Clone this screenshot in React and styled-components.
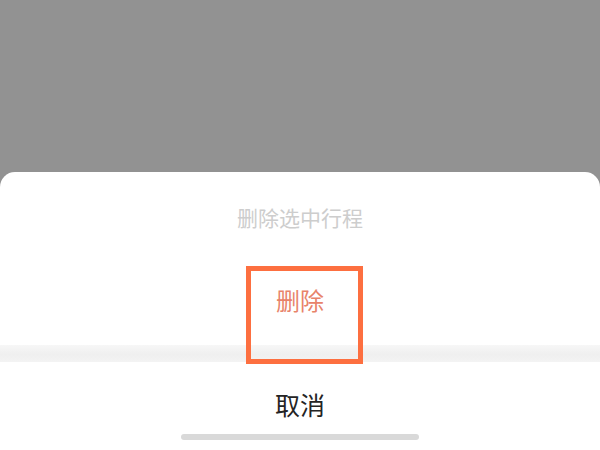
import React from "react";
import styled, { createGlobalStyle } from "styled-components";

const Global = createGlobalStyle`
  html, body { margin: 0; padding: 0; }
  body {
    width: 600px;
    height: 450px;
    overflow: hidden;
    font-family: "Noto Sans CJK SC", "Noto Sans", sans-serif;
  }
`;

const Screen = styled.div`
  width: 600px;
  height: 450px;
  display: flex;
  flex-direction: column;
  background: #929292;
`;

const Backdrop = styled.div`
  flex: 1;
`;

const Sheet = styled.div`
  height: 278px;
  background: #ffffff;
  border-radius: 15px 15px 0 0;
  display: flex;
  flex-direction: column;
  align-items: stretch;
`;

const Title = styled.div`
  height: 90px;
  box-sizing: border-box;
  padding-top: 31px;
  text-align: center;
  font-size: 21px;
  line-height: 28px;
  color: #cdcdcd;
`;

const ActionRow = styled.div`
  position: relative;
  height: 83px;
  box-sizing: border-box;
  padding-top: 24px;
  text-align: center;
  font-size: 24px;
  line-height: 28px;
  color: ${(p) => p.$color};
`;

const Highlight = styled.div`
  position: absolute;
  top: 4px;
  left: calc(50% - 54px);
  width: 117px;
  height: 98px;
  box-sizing: border-box;
  border: 5px solid #fd6f40;
  z-index: 2;
  pointer-events: none;
`;

const Separator = styled.div`
  height: 17px;
  background: linear-gradient(#f7f7f7, #efefef 55%, #f3f3f3);
`;

const CancelRow = styled.div`
  height: 72px;
  box-sizing: border-box;
  padding-top: 28px;
  text-align: center;
  font-size: 25px;
  line-height: 28px;
  color: #242424;
`;

const HomeBar = styled.div`
  align-self: center;
  width: 238px;
  height: 6px;
  border-radius: 3px;
  background: #d9d9d9;
`;

export default function App() {
  return (
    <>
      <Global />
      <Screen>
        <Backdrop />
        <Sheet>
          <Title>删除选中行程</Title>
          <ActionRow $color="#e8836a">
            删除
            <Highlight />
          </ActionRow>
          <Separator />
          <CancelRow>取消</CancelRow>
          <HomeBar />
        </Sheet>
      </Screen>
    </>
  );
}
